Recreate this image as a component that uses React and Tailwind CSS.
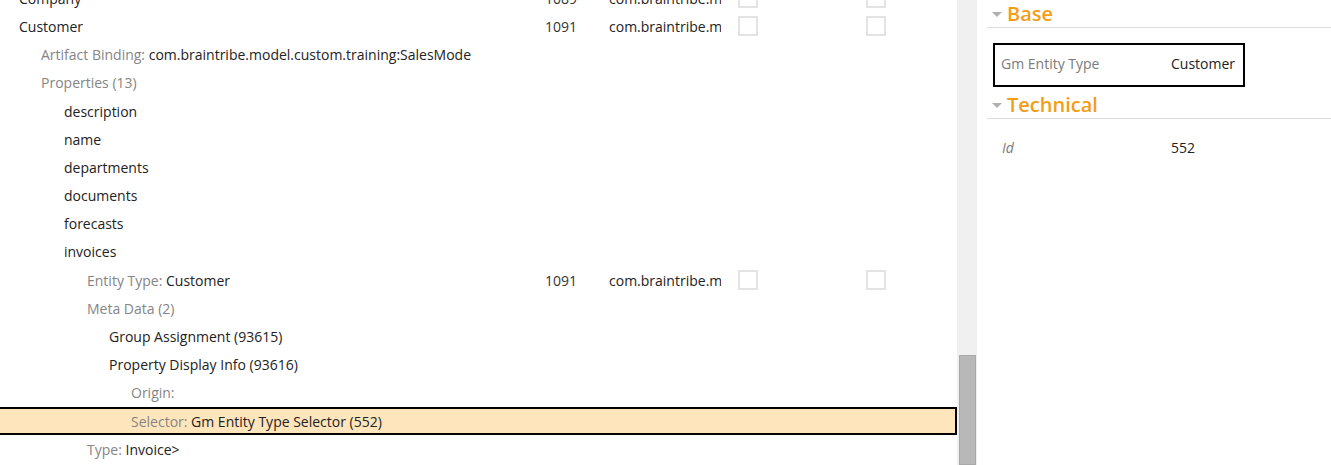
const rows = [
  { level: 0, name: 'Company', id: '1089', pkg: 'com.braintribe.model', checks: true },
  { level: 0, name: 'Customer', id: '1091', pkg: 'com.braintribe.model', checks: true },
  { level: 1, label: 'Artifact Binding:', value: 'com.braintribe.model.custom.training:SalesMode' },
  { level: 1, label: 'Properties (13)' },
  { level: 2, name: 'description' },
  { level: 2, name: 'name' },
  { level: 2, name: 'departments' },
  { level: 2, name: 'documents' },
  { level: 2, name: 'forecasts' },
  { level: 2, name: 'invoices' },
  { level: 3, label: 'Entity Type:', value: 'Customer', id: '1091', pkg: 'com.braintribe.model', checks: true },
  { level: 3, label: 'Meta Data (2)' },
  { level: 4, name: 'Group Assignment (93615)' },
  { level: 4, name: 'Property Display Info (93616)' },
  { level: 5, label: 'Origin:' },
  { level: 5, label: 'Selector:', value: 'Gm Entity Type Selector (552)', selected: true },
  { level: 3, label: 'Type:', value: 'Invoice>' },
];

const indent = ['pl-[19px]', 'pl-[41px]', 'pl-[64px]', 'pl-[87px]', 'pl-[109px]', 'pl-[131px]'];

const Check = () => (
  <div className="w-[20px] h-[20px] border-2 border-[#e3e3e3] bg-white" />
);

const Row = ({ row }) => (
  <div
    className={`flex items-center h-[28.2px] whitespace-nowrap ${
      row.selected ? 'bg-[#fee5bb] border-2 border-black -ml-[2px] w-[959px]' : 'w-[957px]'
    }`}
  >
    <div className={`w-[545px] shrink-0 overflow-hidden ${indent[row.level]}`}>
      {row.name && <span className="text-[#222]">{row.name}</span>}
      {row.label && <span className="text-[#858585]">{row.label}</span>}
      {row.value && <span className="text-[#222]"> {row.value}</span>}
    </div>
    {row.id && (
      <>
        <div className="w-[64px] shrink-0 text-[#333]">{row.id}</div>
        <div className="w-[112px] shrink-0 overflow-hidden text-[#222]">{row.pkg}</div>
        <div className="w-[145px] shrink-0 pl-[17px]">
          <Check />
        </div>
        <div className="w-[60px] shrink-0">
          <Check />
        </div>
      </>
    )}
  </div>
);

const GroupHeader = ({ title }) => (
  <div className="flex items-end h-[28px] border-b border-[#dddddd]">
    <div className="flex items-center pl-[5px] pb-[1px]">
      <svg width="10" height="6" viewBox="0 0 10 6" className="mt-[2px]">
        <path d="M0 0 L10 0 L5 5 Z" fill="#b0b0b0" />
      </svg>
      <span className="ml-[5px] text-[20px] leading-[24px] font-semibold text-[#f49d16]">{title}</span>
    </div>
  </div>
);

export default function App() {
  return (
    <div
      className="flex w-[1331px] h-[465px] overflow-hidden bg-white text-[14px]"
      style={{ fontFamily: '"Open Sans", "Noto Sans", sans-serif' }}
    >
      {/* Tree grid */}
      <div className="w-[957px] h-full overflow-hidden shrink-0">
        <div className="-mt-[15.8px]">
          {rows.map((r, i) => (
            <Row key={i} row={r} />
          ))}
        </div>
      </div>

      {/* Scrollbar */}
      <div className="w-[20px] h-full bg-[#f0f0f0] shrink-0 flex flex-col">
        <div className="h-[355px]" />
        <div className="flex-1 ml-[2px] w-[17px] bg-[#b8b8b8] border border-[#a9a9a9]" />
      </div>

      {/* Property panel */}
      <div className="flex-1 pl-[10px]">
        <GroupHeader title="Base" />
        <div className="ml-[6px] mt-[15px] w-[252px] h-[44px] pb-[4px] border-2 border-black flex items-center whitespace-nowrap">
          <span className="w-[176px] pl-[6px] text-[#7a7a7a]">Gm Entity Type</span>
          <span className="text-[#222]">Customer</span>
        </div>
        <div className="mt-[4px]">
          <GroupHeader title="Technical" />
        </div>
        <div className="flex items-center h-[28px] mt-[14px] whitespace-nowrap">
          <span className="w-[184px] pl-[15px] italic text-[#7a7a7a]">Id</span>
          <span className="text-[#222]">552</span>
        </div>
      </div>
    </div>
  );
}
